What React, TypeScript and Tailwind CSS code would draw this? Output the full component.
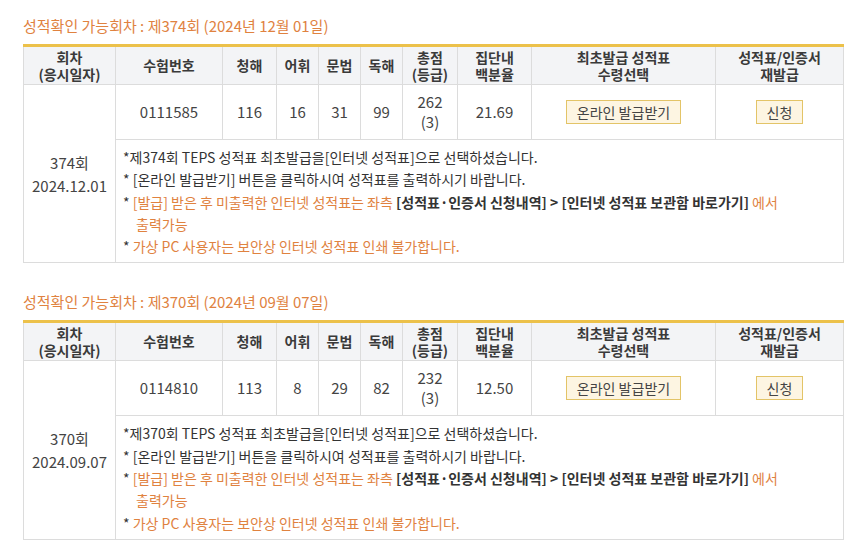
import React from "react"

type Round = {
  no: string
  date: string
  dateLabel: string
  examNo: string
  listening: number
  vocab: number
  grammar: number
  reading: number
  total: number
  grade: number
  pct: string
}

const rounds: Round[] = [
  { no: "374", date: "2024.12.01", dateLabel: "2024년 12월 01일", examNo: "0111585", listening: 116, vocab: 16, grammar: 31, reading: 99, total: 262, grade: 3, pct: "21.69" },
  { no: "370", date: "2024.09.07", dateLabel: "2024년 09월 07일", examNo: "0114810", listening: 113, vocab: 8, grammar: 29, reading: 82, total: 232, grade: 3, pct: "12.50" },
]

const th = "border-b border-l border-[#dcdcdc] first:border-l-0 font-semibold text-[#3a3a3a] text-[14px] leading-[17px] text-center align-middle"
const td = "border-l border-b border-[#dcdcdc] text-center align-middle text-[#444] text-[15px]"

function ScoreTable({ r }: { r: Round }) {
  return (
    <div>
      <h3 className="text-[15px] leading-[20px] text-[#e0823f] font-normal">
        성적확인 가능회차 : 제{r.no}회 ({r.dateLabel})
      </h3>
      <table className="mt-[8px] w-[820px] table-fixed border-collapse border-t-[3px] border-t-[#ecc14a] border-x border-x-[#dcdcdc]">
        <colgroup>
          <col className="w-[92px]" />
          <col className="w-[107px]" />
          <col className="w-[54px]" />
          <col className="w-[42px]" />
          <col className="w-[42px]" />
          <col className="w-[42px]" />
          <col className="w-[55px]" />
          <col className="w-[74px]" />
          <col className="w-[184px]" />
          <col className="w-[128px]" />
        </colgroup>
        <thead>
          <tr className="h-[39px] bg-[#f3f4f6]">
            <th className={th}>회차<br />(응시일자)</th>
            <th className={th}>수험번호</th>
            <th className={th}>청해</th>
            <th className={th}>어휘</th>
            <th className={th}>문법</th>
            <th className={th}>독해</th>
            <th className={th}>총점<br />(등급)</th>
            <th className={th}>집단내<br />백분율</th>
            <th className={th}>최초발급 성적표<br />수령선택</th>
            <th className={th}>성적표/인증서<br />재발급</th>
          </tr>
        </thead>
        <tbody>
          <tr className="h-[55px]">
            <td rowSpan={2} className="border-b border-[#dcdcdc] text-center align-middle text-[#444] text-[15px] leading-[23px]">
              {r.no}회<br />{r.date}
            </td>
            <td className={td}>{r.examNo}</td>
            <td className={td}>{r.listening}</td>
            <td className={td}>{r.vocab}</td>
            <td className={td}>{r.grammar}</td>
            <td className={td}>{r.reading}</td>
            <td className={td + " leading-[20px]"}>{r.total}<br />({r.grade})</td>
            <td className={td}>{r.pct}</td>
            <td className={td}>
              <button className="h-[24px] px-[10px] border border-[#e3c467] bg-[#fdf5e2] text-[14px] text-[#444] leading-[22px]">
                온라인 발급받기
              </button>
            </td>
            <td className={td}>
              <button className="h-[24px] px-[10px] border border-[#e3c467] bg-[#fdf5e2] text-[14px] text-[#444] leading-[22px]">
                신청
              </button>
            </td>
          </tr>
          <tr>
            <td colSpan={9} className="border-l border-b border-[#dcdcdc] pl-[7px] pt-[6px] pb-[5px] text-left text-[14px] leading-[22.3px] text-[#333]">
              <div>*제{r.no}회 TEPS 성적표 최초발급을[인터넷 성적표]으로 선택하셨습니다.</div>
              <div>* [온라인 발급받기] 버튼을 클릭하시여 성적표를 출력하시기 바랍니다.</div>
              <div className="pl-[13px] -indent-[13px]">
                * <span className="text-[#e0823f]">[발급] 받은 후 미출력한 인터넷 성적표는 좌측 </span>
                <b className="font-semibold text-[#333]">[성적표·인증서 신청내역] &gt; [인터넷 성적표 보관함 바로가기]</b>
                <span className="text-[#e0823f]"> 에서<br />출력가능</span>
              </div>
              <div>
                * <span className="text-[#e0823f]">가상 PC 사용자는 보안상 인터넷 성적표 인쇄 불가합니다.</span>
              </div>
            </td>
          </tr>
        </tbody>
      </table>
    </div>
  )
}

export default function App() {
  return (
    <div className="w-[850px] h-[552px] bg-white pl-[23px] pt-[16px] font-['Noto_Sans_CJK_KR',sans-serif] overflow-hidden">
      <div className="flex flex-col gap-[29px]">
        {rounds.map((r) => (
          <ScoreTable key={r.no} r={r} />
        ))}
      </div>
    </div>
  )
}
